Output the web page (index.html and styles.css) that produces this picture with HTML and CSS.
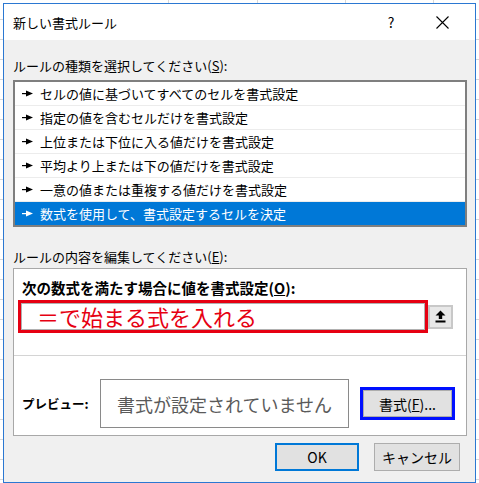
FILE: index.html
```html
<!DOCTYPE html>
<html lang="ja">
<head>
<meta charset="utf-8">
<title>新しい書式ルール</title>
<link rel="stylesheet" href="styles.css">
</head>
<body>
<div class="dialog">
  <div class="titlebar">
    <span class="title">新しい書式ルール</span>
    <span class="help">?</span>
    <span class="close"><svg width="13" height="13" viewBox="0 0 13 13"><path d="M0.5 0.5L12.5 12.5M12.5 0.5L0.5 12.5" stroke="#000" stroke-width="1.1" fill="none"/></svg></span>
  </div>
  <div class="body">
    <div class="label">ルールの種類を選択してください(<u>S</u>):</div>
    <ul class="rules">
      <li class="rule"><svg class="arrow" width="11" height="7" viewBox="0 0 11 7"><rect x="0" y="3" width="5" height="1.2" fill="currentColor"/><polygon points="4,0.5 11,3.5 4,6.5" fill="currentColor"/></svg><span>セルの値に基づいてすべてのセルを書式設定</span></li>
      <li class="rule"><svg class="arrow" width="11" height="7" viewBox="0 0 11 7"><rect x="0" y="3" width="5" height="1.2" fill="currentColor"/><polygon points="4,0.5 11,3.5 4,6.5" fill="currentColor"/></svg><span>指定の値を含むセルだけを書式設定</span></li>
      <li class="rule"><svg class="arrow" width="11" height="7" viewBox="0 0 11 7"><rect x="0" y="3" width="5" height="1.2" fill="currentColor"/><polygon points="4,0.5 11,3.5 4,6.5" fill="currentColor"/></svg><span>上位または下位に入る値だけを書式設定</span></li>
      <li class="rule"><svg class="arrow" width="11" height="7" viewBox="0 0 11 7"><rect x="0" y="3" width="5" height="1.2" fill="currentColor"/><polygon points="4,0.5 11,3.5 4,6.5" fill="currentColor"/></svg><span>平均より上または下の値だけを書式設定</span></li>
      <li class="rule"><svg class="arrow" width="11" height="7" viewBox="0 0 11 7"><rect x="0" y="3" width="5" height="1.2" fill="currentColor"/><polygon points="4,0.5 11,3.5 4,6.5" fill="currentColor"/></svg><span>一意の値または重複する値だけを書式設定</span></li>
      <li class="rule selected"><svg class="arrow" width="11" height="7" viewBox="0 0 11 7"><rect x="0" y="3" width="5" height="1.2" fill="currentColor"/><polygon points="4,0.5 11,3.5 4,6.5" fill="currentColor"/></svg><span>数式を使用して、書式設定するセルを決定</span></li>
    </ul>
    <div class="label label2">ルールの内容を編集してください(<u>E</u>):</div>
    <div class="panel">
      <div class="panel-top">
        <div class="bold-label">次の数式を満たす場合に値を書式設定(<u>O</u>):</div>
        <div class="formula-row">
          <div class="formula">＝で始まる式を入れる</div>
          <div class="ref-btn"><svg width="11" height="13" viewBox="0 0 11 13"><polygon points="5.5,0.5 10.5,5.5 7.2,5.5 7.2,9 3.8,9 3.8,5.5 0.5,5.5" fill="#000"/><rect x="0.5" y="10.5" width="10" height="2" fill="#000"/></svg></div>
        </div>
      </div>
      <div class="panel-bottom">
        <div class="bold-label preview-label">プレビュー:</div>
        <div class="preview">書式が設定されていません</div>
        <div class="format-outline"><div class="btn format-btn">書式(<u>F</u>)...</div></div>
      </div>
    </div>
    <div class="actions">
      <div class="btn ok">OK</div>
      <div class="btn cancel">キャンセル</div>
    </div>
  </div>
</div>
</body>
</html>
```

FILE: styles.css
```css
* { box-sizing: border-box; }
html, body { margin: 0; padding: 0; }
body {
  width: 479px;
  height: 483px;
  overflow: hidden;
  font-family: "Noto Sans CJK JP", "Noto Sans", sans-serif;
  color: #000;
  background-color: #fff;
  background-image:
    linear-gradient(to right, transparent 168px, #d8d8d8 168px, #d8d8d8 169px, transparent 169px, transparent 257px, #d8d8d8 257px, #d8d8d8 258px, transparent 258px, transparent 345px, #d8d8d8 345px, #d8d8d8 346px, transparent 346px, transparent 433px, #d8d8d8 433px, #d8d8d8 434px, transparent 434px),
    repeating-linear-gradient(to bottom, transparent 0, transparent 19px, #d8d8d8 19px, #d8d8d8 20px);
  padding: 3px 3px 0 3px;
}
.dialog {
  width: 473px;
  height: 480px;
  border: 1px solid #2b78d2;
  background: #f0f0f0;
  display: flex;
  flex-direction: column;
}
.titlebar {
  height: 36px;
  background: #fff;
  display: flex;
  align-items: center;
  padding-left: 9px;
}
.title { font-size: 13px; flex: 1; }
.help { font-size: 14px; width: 20px; text-align: center; margin-right: 35px; }
.close { width: 13px; height: 13px; display: flex; margin-right: 26px; }
.body {
  flex: 1;
  padding: 16px 8px 0 9px;
  display: flex;
  flex-direction: column;
}
.label {
  font-size: 13px;
  line-height: 20px;
  height: 20px;
  white-space: nowrap;
}
.rules {
  list-style: none;
  margin: 4px 0 0 0;
  padding: 0;
  width: 454px;
  border: 2px solid #7f7f7f;
  background: #fff;
}
.rule {
  height: 24px;
  border-bottom: 1px solid #ececec;
  display: flex;
  align-items: center;
  padding-left: 7px;
  font-size: 13px;
  white-space: nowrap;
  color: #000;
}
.rule:last-child { border-bottom: none; height: 23px; }
.rule .arrow { margin-right: 7px; flex: none; }
.rule.selected { background: #0078d7; color: #fff; }
.label2 { margin-top: 20px; }
.panel {
  margin-top: 1px;
  width: 454px;
  border: 1px solid #a8a8a8;
  background: #fff;
}
.panel-top {
  height: 87px;
  border-bottom: 1px solid #d4d4d4;
  padding-top: 9px;
}
.bold-label {
  font-size: 14.5px;
  font-weight: bold;
  line-height: 20px;
  padding-left: 8px;
  white-space: nowrap;
}
.formula-row {
  display: flex;
  align-items: center;
  margin-top: 2px;
  padding-left: 4px;
}
.formula {
  width: 410px;
  height: 33px;
  border: 3px solid #e60012;
  box-shadow: inset 0 0 0 1px #b0b0b0;
  color: #e60012;
  font-size: 22px;
  line-height: 27px;
  padding-left: 16px;
  white-space: nowrap;
}
.ref-btn {
  width: 25px;
  height: 24px;
  border: 2px solid #c8c8c8;
  background: #e8e8e8;
  display: flex;
  align-items: center;
  justify-content: center;
}
.panel-bottom {
  height: 79px;
  display: flex;
  align-items: center;
  padding-top: 16px;
}
.preview-label { width: 86px; flex: none; font-size: 12.5px; }
.preview {
  width: 249px;
  height: 49px;
  border: 1px solid #8a8a8a;
  background: #fff;
  color: #5a5a5a;
  font-size: 18px;
  display: flex;
  align-items: center;
  justify-content: center;
  white-space: nowrap;
}
.format-outline {
  margin-left: 11px;
  width: 95px;
  height: 33px;
  border: 3px solid #0010ff;
  display: flex;
}
.btn {
  background: #e1e1e1;
  border: 1px solid #adadad;
  display: flex;
  align-items: center;
  justify-content: center;
  font-size: 14px;
  white-space: nowrap;
}
.format-btn { flex: 1; }
.actions {
  display: flex;
  justify-content: flex-end;
  gap: 15px;
  margin-top: 7px;
  padding-right: 7px;
}
.ok {
  width: 84px;
  height: 28px;
  border: 2px solid #0078d7;
}
.cancel {
  width: 86px;
  height: 28px;
}
```
